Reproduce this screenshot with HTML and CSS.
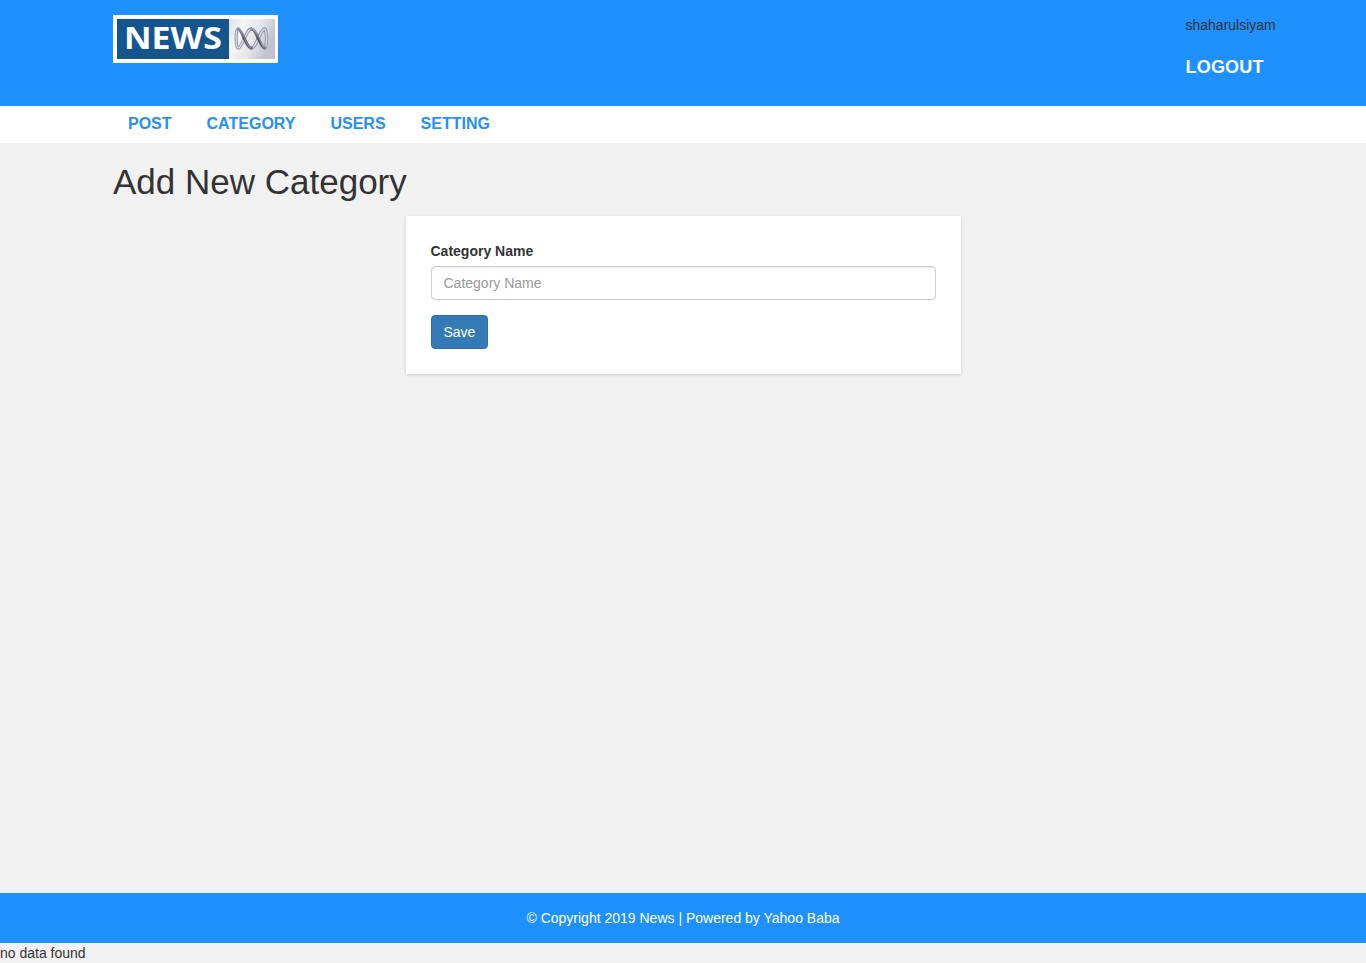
FILE: index.html
```html
<!DOCTYPE html>
<html lang="en">
<head>
<meta charset="utf-8">
<title>Add New Category</title>
<link rel="stylesheet" href="styles.css">
</head>
<body>
<header class="header">
  <div class="container header-row">
    <a class="logo" href="#">
      <svg width="165" height="48" viewBox="0 0 165 48">
        <defs>
          <linearGradient id="silver" x1="0" y1="0" x2="1" y2="0.4"><stop offset="0" stop-color="#dfe0e5"/><stop offset=".3" stop-color="#f5f5f8"/><stop offset=".6" stop-color="#e8e8ed"/><stop offset="1" stop-color="#c2c2ce"/></linearGradient>
          <linearGradient id="chrome" x1="0" y1="0" x2="0" y2="1"><stop offset="0" stop-color="#8d8f9b"/><stop offset=".5" stop-color="#45475a"/><stop offset="1" stop-color="#666878"/></linearGradient>
        </defs>
        <rect width="165" height="48" fill="#fff"/>
        <rect x="4" y="4" width="112" height="40" fill="#145590"/>
        <rect x="116" y="4" width="46" height="40" fill="url(#silver)"/>
        <text class="logo-text" x="11" y="34" textLength="98" lengthAdjust="spacingAndGlyphs">NEWS</text>
        <g fill="none" stroke-linecap="round" transform="translate(9.700 0) scale(.93 1)">
          <path stroke="#8e909d" stroke-width="3.400" d="M152.400 14C148 14 144 33 138.300 33M124.200 33C128.600 33 132.600 14 138.300 14M124.200 14C121.200 14 121.200 33 124.200 33M152.400 33C155.400 33 155.400 14 152.400 14"/>
          <path stroke="#dedfe7" stroke-width="1.500" d="M152.400 14C148 14 144 33 138.300 33M124.200 33C128.600 33 132.600 14 138.300 14M124.200 14C121.200 14 121.200 33 124.200 33M152.400 33C155.400 33 155.400 14 152.400 14"/>
          <path stroke="url(#chrome)" stroke-width="3.100" d="M138.300 14C144 14 148 33 152.400 33M138.300 33C132.600 33 128.600 14 124.200 14"/>
          <path stroke="#b3b5c2" stroke-width=".7" d="M138.800 13.500C144.500 13.500 148.500 31.500 152.400 32.700M137.600 32.500C132.600 32 129.100 13.500 124.700 13.500"/>
        </g>
      </svg>
    </a>
    <div class="account"><span>shaharulsiyam</span><a class="logout" href="#">logout</a></div>
  </div>
</header>
<nav class="menubar"><ul class="container menu"><li><a href="#">Post</a></li><li><a href="#">Category</a></li><li><a href="#">Users</a></li><li><a href="#">Setting</a></li></ul></nav>
<main class="content">
  <div class="container">
    <h1 class="heading">Add New Category</h1>
    <form class="card">
      <label class="label" for="cat">Category Name</label>
      <input class="input" id="cat" type="text" placeholder="Category Name">
      <button class="button" type="button">Save</button>
    </form>
  </div>
</main>
<footer class="footer">© Copyright 2019 News | Powered by Yahoo Baba</footer>
<div class="status">no data found</div>
</body>
</html>
```
FILE: styles.css
```css
* { box-sizing: border-box; }
body { margin: 0; background: #f1f1f1; color: #333; font: 14px/20px "Liberation Sans", Arial, sans-serif; }
a { text-decoration: none; }
.container { width: 1140px; margin: 0 auto; }
.header { height: 106px; padding-top: 15px; background: #1e90ff; }
.header-row { display: flex; justify-content: space-between; align-items: flex-start; }
.logo { display: block; height: 48px; }
.logo svg { display: block; }
.logo-text { font: 700 30.500px "Open Sans", sans-serif; fill: #fff; }
.account { width: 67.500px; }
.account span { display: block; }
.logout { display: block; margin-top: 20px; color: #fff; font-size: 18px; line-height: 24px; font-weight: 700; letter-spacing: .2px; text-transform: uppercase; }
.menubar { height: 37px; background: #fff; }
.menu { display: flex; gap: 5px; padding: 0; list-style: none; }
.menu a { display: block; padding: 8px 15px 9px; color: #1e90ff; font-size: 16px; font-weight: 700; line-height: 20px; text-transform: uppercase; }
.content { height: 750px; padding-top: 19px; }
.heading { margin: 0 0 15px; font-size: 35px; font-weight: 400; line-height: 39px; }
.card { width: 555px; height: 158px; margin: 0 auto; padding: 25px; background: #fff; box-shadow: 0 1px 3px rgba(0,0,0,.16); }
.label { display: block; margin-bottom: 5px; font-weight: 700; }
.input { display: block; width: 100%; height: 34px; margin-bottom: 15px; padding: 6px 12px; border: 1px solid #ccc; border-radius: 4px; background: #fff; box-shadow: inset 0 1px 1px rgba(0,0,0,.075); font: inherit; }
.input::placeholder { color: #999; opacity: 1; }
.button { display: block; height: 34px; padding: 6px 12px; border: 1px solid #2e6da4; border-radius: 4px; background: #337ab7; color: #fff; font: inherit; }
.footer { height: 50px; padding: 15px; background: #1e90ff; color: #fff; text-align: center; }
```
